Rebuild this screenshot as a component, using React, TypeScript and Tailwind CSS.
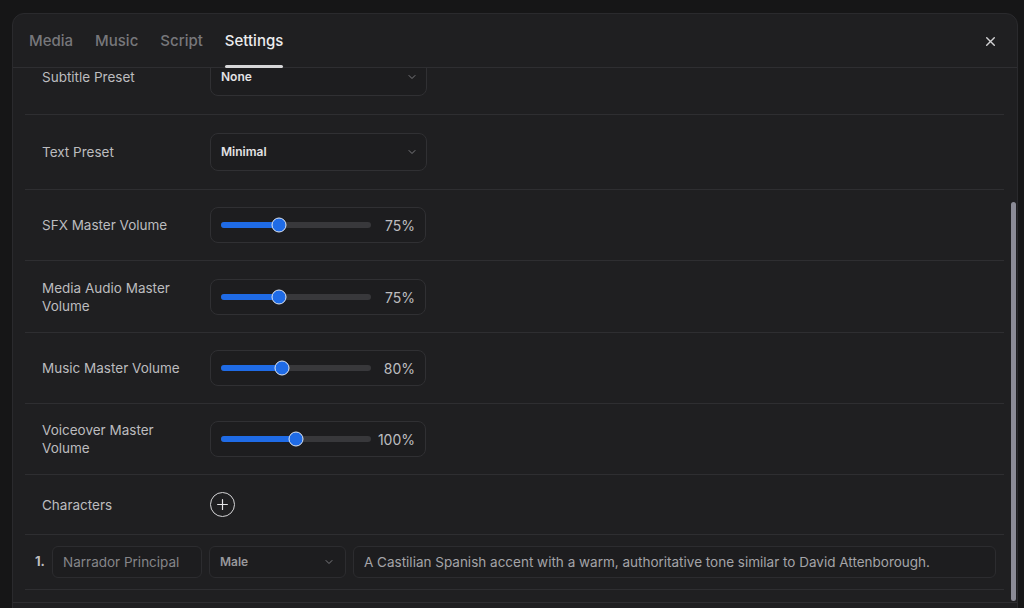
import React from "react";

const font = { fontFamily: "Inter, 'Noto Sans', sans-serif" };

function Chevron() {
  return (
    <svg width="12" height="12" viewBox="0 0 24 24" fill="none" stroke="#7a7a7e" strokeWidth="2" strokeLinecap="round" strokeLinejoin="round">
      <path d="m6 9 6 6 6-6" />
    </svg>
  );
}

function SelectBox({ value }: { value: string }) {
  return (
    <div className="w-[217px] h-[38px] rounded-lg border border-[#303033] bg-[#1d1d1f] flex items-center justify-between pl-[10px] pr-[8px]">
      <span className="text-[12px] font-semibold text-[#e2e2e4]">{value}</span>
      <Chevron />
    </div>
  );
}

function SliderBox({ value }: { value: number }) {
  const thumb = 7 + (value / 200) * 136;
  return (
    <div className="w-[216px] h-[36px] rounded-lg border border-[#303033] bg-[#1d1d1f] flex items-center pl-[10px] pr-[10px]">
      <div className="relative w-[150px] h-[6px] rounded-full bg-[#38383b]">
        <div className="absolute left-0 top-0 h-full rounded-full bg-[#1f6be6]" style={{ width: thumb }} />
        <div
          className="absolute top-1/2 w-[15px] h-[15px] -translate-x-1/2 -translate-y-1/2 rounded-full bg-[#1f6be6] border-[1.5px] border-[#dfe6f2]"
          style={{ left: thumb }}
        />
      </div>
      <span className="ml-auto text-[14px] text-[#bdbdc0]">{value}%</span>
    </div>
  );
}

function Row({ label, children, py = "py-[18px]" }: { label: string; children: React.ReactNode; py?: string }) {
  return (
    <div className={`flex items-center border-b border-[#2e2e31] px-[17px] ${py}`}>
      <div className="w-[168px] pr-[18px] text-[13.5px] leading-[18px] text-[#bcbcbf]">{label}</div>
      {children}
    </div>
  );
}

export default function App() {
  const tabs = ["Media", "Music", "Script", "Settings"];
  return (
    <div className="w-[1024px] h-[608px] overflow-hidden bg-[#161617] pt-[13px] pl-[12px]" style={font}>
      <div className="w-[1006px] h-[620px] rounded-t-[12px] border border-[#2a2a2d] bg-[#1f1f21] flex flex-col">
        {/* header with tabs */}
        <div className="h-[54px] shrink-0 border-b border-[#2e2e31] flex items-stretch pl-[16px] pr-[20px]">
          <div className="flex gap-[22px]">
            {tabs.map((t) => (
              <div key={t} className="relative flex items-center pt-[2px]">
                <span className={`text-[15px] font-medium ${t === "Settings" ? "text-[#ececee]" : "text-[#77777b]"}`}>{t}</span>
                {t === "Settings" && (
                  <div className="absolute left-0 right-0 -bottom-px h-[3px] rounded-full bg-[#d6d6d8]" />
                )}
              </div>
            ))}
          </div>
          <div className="ml-auto flex items-center pt-[2px]">
            <svg width="13" height="13" viewBox="0 0 24 24" fill="none" stroke="#d2d2d4" strokeWidth="2.6" strokeLinecap="round">
              <path d="M5 5l14 14M19 5L5 19" />
            </svg>
          </div>
        </div>

        {/* scrolling settings list */}
        <div className="h-[535px] shrink-0 flex border-b border-[#2e2e31]">
          <div className="flex-1 overflow-hidden pl-[12px]">
            <div className="-mt-[28px]">
              <Row label="Subtitle Preset">
                <SelectBox value="None" />
              </Row>
              <Row label="Text Preset">
                <SelectBox value="Minimal" />
              </Row>
              <Row label="SFX Master Volume" py="py-[17px]">
                <SliderBox value={75} />
              </Row>
              <Row label="Media Audio Master Volume" py="pt-[18px] pb-[17px]">
                <SliderBox value={75} />
              </Row>
              <Row label="Music Master Volume" py="py-[17px]">
                <SliderBox value={80} />
              </Row>
              <Row label="Voiceover Master Volume" py="py-[17px]">
                <SliderBox value={100} />
              </Row>
              <Row label="Characters" py="py-[17px]">
                <div className="w-[25px] h-[25px] rounded-full border-[1.5px] border-[#d4d4d6] flex items-center justify-center">
                  <svg width="13" height="13" viewBox="0 0 24 24" fill="none" stroke="#e4e4e6" strokeWidth="2.2" strokeLinecap="round">
                    <path d="M12 3v18M3 12h18" />
                  </svg>
                </div>
              </Row>
              <div className="flex items-center border-b border-[#2e2e31] pl-[10px] pr-[8px] py-[11px] gap-[7px]">
                <span className="w-[17px] -mr-[7px] text-[13px] font-bold text-[#bdbdc0]">1.</span>
                <div className="w-[150px] h-[32px] rounded-md border border-[#2c2c2f] bg-[#1d1d1f] flex items-center pl-[10px] text-[13.5px] text-[#858589]">
                  Narrador Principal
                </div>
                <div className="w-[137px] h-[32px] rounded-md border border-[#2c2c2f] bg-[#1d1d1f] flex items-center justify-between pl-[10px] pr-[10px]">
                  <span className="text-[12px] font-semibold text-[#98989c]">Male</span>
                  <Chevron />
                </div>
                <div className="flex-1 h-[32px] rounded-md border border-[#2c2c2f] bg-[#1d1d1f] flex items-center pl-[10px] text-[13.5px] text-[#a4a4a8] whitespace-nowrap overflow-hidden">
                  A Castilian Spanish accent with a warm, authoritative tone similar to David Attenborough.
                </div>
              </div>
            </div>
          </div>
          {/* scrollbar */}
          <div className="w-[13px] shrink-0 relative">
            <div className="absolute left-[7px] top-[134px] bottom-[1px] w-[5px] rounded-full bg-[#8b8b96]" />
          </div>
        </div>
      </div>
    </div>
  );
}
